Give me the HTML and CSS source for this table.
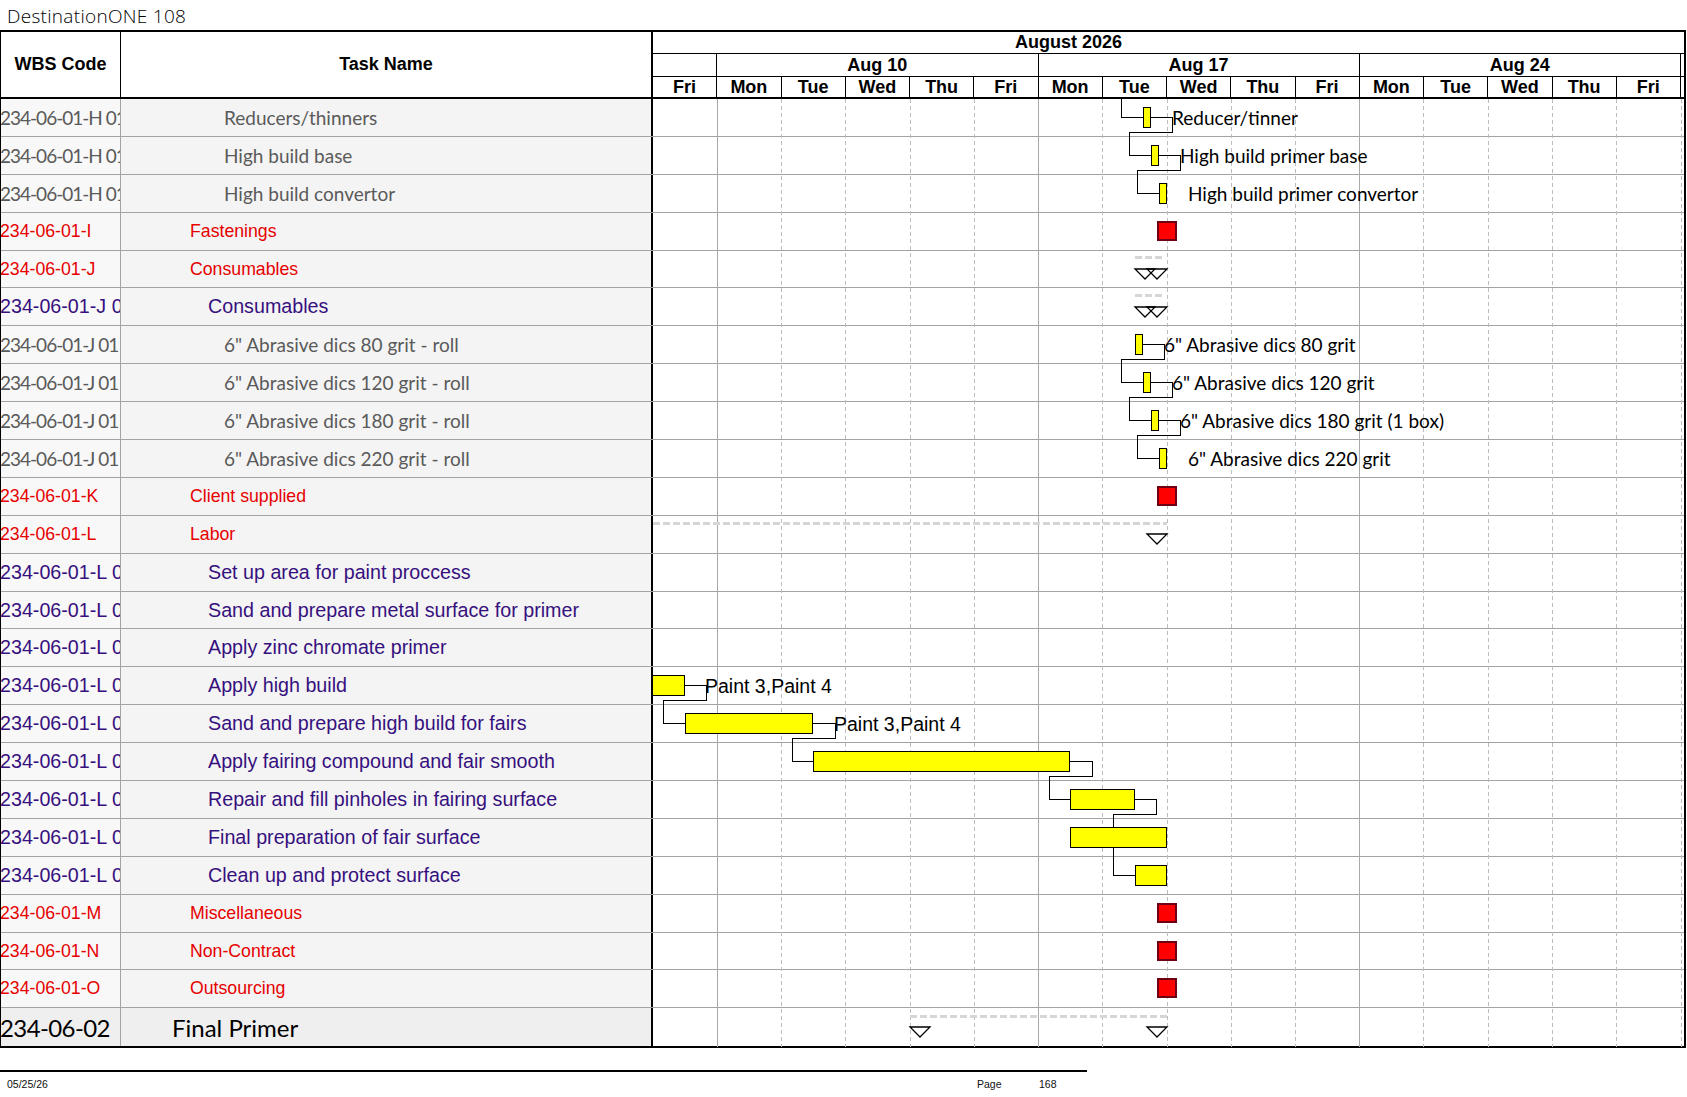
FILE: index.html
```html
<!DOCTYPE html>
<html>
<head>
<meta charset="utf-8">
<title>DestinationONE 108</title>
<link rel="stylesheet" href="styles.css">
</head>
<body>
<div class="title">DestinationONE 108</div>
<div class="sheet">
  <div class="head">
    <div class="h-wbs">WBS Code</div>
    <div class="h-task">Task Name</div>
    <div class="h-time">
      <div class="h-month">August 2026</div>
      <div class="h-weeks">
        <div class="wk"></div>
        <div class="wk">Aug 10</div>
        <div class="wk">Aug 17</div>
        <div class="wk">Aug 24</div>
      </div>
      <div class="h-days">
        <div class="day">Fri</div>
        <div class="day">Mon</div><div class="day">Tue</div><div class="day">Wed</div><div class="day">Thu</div><div class="day">Fri</div>
        <div class="day">Mon</div><div class="day">Tue</div><div class="day">Wed</div><div class="day">Thu</div><div class="day">Fri</div>
        <div class="day">Mon</div><div class="day">Tue</div><div class="day">Wed</div><div class="day">Thu</div><div class="day">Fri</div>
      </div>
    </div>
  </div>
  <div class="body">
    <svg class="overlay" width="1031" height="948" viewBox="0 0 1031 948">
      <g class="grid-solid">
        <line x1="64.5" y1="0" x2="64.5" y2="948"/>
        <line x1="385.5" y1="0" x2="385.5" y2="948"/>
        <line x1="706.5" y1="0" x2="706.5" y2="948"/>
      </g>
      <g class="grid-dash">
        <line x1="128.5" y1="0" x2="128.5" y2="948"/>
        <line x1="192.5" y1="0" x2="192.5" y2="948"/>
        <line x1="257.5" y1="0" x2="257.5" y2="948"/>
        <line x1="321.5" y1="0" x2="321.5" y2="948"/>
        <line x1="449.5" y1="0" x2="449.5" y2="948"/>
        <line x1="514.5" y1="0" x2="514.5" y2="948"/>
        <line x1="578.5" y1="0" x2="578.5" y2="948"/>
        <line x1="642.5" y1="0" x2="642.5" y2="948"/>
        <line x1="770.5" y1="0" x2="770.5" y2="948"/>
        <line x1="835.5" y1="0" x2="835.5" y2="948"/>
        <line x1="899.5" y1="0" x2="899.5" y2="948"/>
        <line x1="963.5" y1="0" x2="963.5" y2="948"/>
        <line x1="1028.5" y1="0" x2="1028.5" y2="948"/>
      </g>
      <g class="summary-line">
        <line x1="482" y1="158.5" x2="512" y2="158.5"/>
        <line x1="482" y1="196.5" x2="512" y2="196.5"/>
        <line x1="0" y1="424" x2="514" y2="424"/>
        <line x1="257" y1="917.5" x2="514" y2="917.5"/>
      </g>
      <g class="summary-tri">
        <polygon points="482,170 502,170 492,180"/>
        <polygon points="494,170 514,170 504,180"/>
        <polygon points="482,208 502,208 492,218"/>
        <polygon points="494,208 514,208 504,218"/>
        <polygon points="494,435 514,435 504,445"/>
        <polygon points="257,928 277,928 267,938"/>
        <polygon points="494,928 514,928 504,938"/>
      </g>
      <g class="links">
        <polyline points="468.5,0 468.5,18.5 490,18.5"/>
        <polyline points="498,18.5 519.5,18.5 519.5,33.5 476.5,33.5 476.5,56.5 498,56.5"/>
        <polyline points="506,56.5 527.5,56.5 527.5,71.5 484.5,71.5 484.5,94.5 506,94.5"/>
        <polyline points="490,245.5 511.5,245.5 511.5,260.5 468.5,260.5 468.5,283.5 490,283.5"/>
        <polyline points="498,283.5 519.5,283.5 519.5,298.5 476.5,298.5 476.5,321.5 498,321.5"/>
        <polyline points="506,321.5 527.5,321.5 527.5,336.5 484.5,336.5 484.5,359.5 506,359.5"/>
        <polyline points="32,586.5 53.5,586.5 53.5,601.5 10.5,601.5 10.5,624.5 32,624.5"/>
        <polyline points="160,624.5 182.5,624.5 182.5,639.5 139.5,639.5 139.5,662.5 160,662.5"/>
        <polyline points="417,662.5 439.5,662.5 439.5,677.5 396.5,677.5 396.5,700.5 417,700.5"/>
        <polyline points="481,700.5 503.5,700.5 503.5,715.5 460.5,715.5 460.5,776.5 482,776.5"/>
      </g>
    </svg>

    <div class="row grey">
      <div class="wbs">234-06-01-H 01</div><div class="task">Reducers/thinners</div>
      <div class="chart"><div class="bar" style="left:490px;width:8px"></div><span class="lbl" style="left:519px">Reducer/tinner</span></div>
    </div>
    <div class="row grey">
      <div class="wbs">234-06-01-H 01</div><div class="task">High build base</div>
      <div class="chart"><div class="bar" style="left:498px;width:8px"></div><span class="lbl" style="left:527px">High build primer base</span></div>
    </div>
    <div class="row grey">
      <div class="wbs">234-06-01-H 01</div><div class="task">High build convertor</div>
      <div class="chart"><div class="bar" style="left:506px;width:8px"></div><span class="lbl" style="left:535px">High build primer convertor</span></div>
    </div>
    <div class="row red">
      <div class="wbs">234-06-01-I</div><div class="task">Fastenings</div>
      <div class="chart"><div class="box" style="left:504px"></div></div>
    </div>
    <div class="row red">
      <div class="wbs">234-06-01-J</div><div class="task">Consumables</div>
      <div class="chart"></div>
    </div>
    <div class="row purple">
      <div class="wbs">234-06-01-J 0</div><div class="task">Consumables</div>
      <div class="chart"></div>
    </div>
    <div class="row grey">
      <div class="wbs">234-06-01-J 01</div><div class="task">6" Abrasive dics 80 grit - roll</div>
      <div class="chart"><div class="bar" style="left:482px;width:8px"></div><span class="lbl" style="left:511px">6" Abrasive dics 80 grit</span></div>
    </div>
    <div class="row grey">
      <div class="wbs">234-06-01-J 01</div><div class="task">6" Abrasive dics 120 grit - roll</div>
      <div class="chart"><div class="bar" style="left:490px;width:8px"></div><span class="lbl" style="left:519px">6" Abrasive dics 120 grit</span></div>
    </div>
    <div class="row grey">
      <div class="wbs">234-06-01-J 01</div><div class="task">6" Abrasive dics 180 grit - roll</div>
      <div class="chart"><div class="bar" style="left:498px;width:8px"></div><span class="lbl" style="left:527px">6" Abrasive dics 180 grit (1 box)</span></div>
    </div>
    <div class="row grey">
      <div class="wbs">234-06-01-J 01</div><div class="task">6" Abrasive dics 220 grit - roll</div>
      <div class="chart"><div class="bar" style="left:506px;width:8px"></div><span class="lbl" style="left:535px">6" Abrasive dics 220 grit</span></div>
    </div>
    <div class="row red">
      <div class="wbs">234-06-01-K</div><div class="task">Client supplied</div>
      <div class="chart"><div class="box" style="left:504px"></div></div>
    </div>
    <div class="row red">
      <div class="wbs">234-06-01-L</div><div class="task">Labor</div>
      <div class="chart"></div>
    </div>
    <div class="row purple">
      <div class="wbs">234-06-01-L 0</div><div class="task">Set up area for paint proccess</div>
      <div class="chart"></div>
    </div>
    <div class="row purple">
      <div class="wbs">234-06-01-L 0</div><div class="task">Sand and prepare metal surface for primer</div>
      <div class="chart"></div>
    </div>
    <div class="row purple">
      <div class="wbs">234-06-01-L 0</div><div class="task">Apply zinc chromate primer</div>
      <div class="chart"></div>
    </div>
    <div class="row purple">
      <div class="wbs">234-06-01-L 0</div><div class="task">Apply high build</div>
      <div class="chart"><div class="bar" style="left:-2px;width:34px"></div><span class="lbl arial" style="left:52px">Paint 3,Paint 4</span></div>
    </div>
    <div class="row purple">
      <div class="wbs">234-06-01-L 0</div><div class="task">Sand and prepare high build for fairs</div>
      <div class="chart"><div class="bar" style="left:32px;width:128px"></div><span class="lbl arial" style="left:181px">Paint 3,Paint 4</span></div>
    </div>
    <div class="row purple">
      <div class="wbs">234-06-01-L 0</div><div class="task">Apply fairing compound and fair smooth</div>
      <div class="chart"><div class="bar" style="left:160px;width:257px"></div></div>
    </div>
    <div class="row purple">
      <div class="wbs">234-06-01-L 0</div><div class="task">Repair and fill pinholes in fairing surface</div>
      <div class="chart"><div class="bar" style="left:417px;width:65px"></div></div>
    </div>
    <div class="row purple">
      <div class="wbs">234-06-01-L 0</div><div class="task">Final preparation of fair surface</div>
      <div class="chart"><div class="bar" style="left:417px;width:97px"></div></div>
    </div>
    <div class="row purple">
      <div class="wbs">234-06-01-L 0</div><div class="task">Clean up and protect surface</div>
      <div class="chart"><div class="bar" style="left:482px;width:32px"></div></div>
    </div>
    <div class="row red">
      <div class="wbs">234-06-01-M</div><div class="task">Miscellaneous</div>
      <div class="chart"><div class="box" style="left:504px"></div></div>
    </div>
    <div class="row red">
      <div class="wbs">234-06-01-N</div><div class="task">Non-Contract</div>
      <div class="chart"><div class="box" style="left:504px"></div></div>
    </div>
    <div class="row red">
      <div class="wbs">234-06-01-O</div><div class="task">Outsourcing</div>
      <div class="chart"><div class="box" style="left:504px"></div></div>
    </div>
    <div class="row final">
      <div class="wbs">234-06-02</div><div class="task">Final Primer</div>
      <div class="chart"></div>
    </div>
  </div>
</div>
<div class="footer">
  <span class="f-date">05/25/26</span>
  <span class="f-page">Page</span>
  <span class="f-num">168</span>
</div>
</body>
</html>
```

FILE: styles.css
```css
* { box-sizing: border-box; }

html, body {
  margin: 0;
  padding: 0;
  background: #ffffff;
}

body {
  width: 1687px;
  height: 1097px;
  overflow: hidden;
  font-family: "Liberation Sans", Arial, sans-serif;
  color: #000;
}

.title {
  height: 30px;
  padding: 3px 0 0 7px;
  font-family: "Open Sans", "DejaVu Sans", sans-serif;
  font-weight: 300;
  font-size: 19px;
  letter-spacing: 0.3px;
  line-height: 26px;
  color: #000;
}

.sheet {
  width: 1686px;
  border-top: 2px solid #000;
  border-left: 1px solid #000;
  border-right: 2px solid #000;
  border-bottom: 2px solid #000;
}

/* ---------- header ---------- */
.head {
  display: flex;
  height: 67px;
  border-bottom: 2px solid #000;
  font-weight: bold;
  font-size: 18px;
}

.h-wbs {
  width: 120px;
  border-right: 1px solid #000;
  display: flex;
  align-items: center;
  justify-content: center;
}

.h-task {
  width: 532px;
  border-right: 2px solid #000;
  display: flex;
  align-items: center;
  justify-content: center;
}

.h-time {
  flex: 1;
  display: flex;
  flex-direction: column;
}

.h-month {
  height: 22px;
  border-bottom: 1px solid #000;
  text-align: center;
  padding-right: 200px;
  line-height: 21px;
}

.h-weeks {
  height: 23px;
  border-bottom: 1px solid #000;
  display: grid;
  grid-template-columns: 64.25px 321.25px 321.25px 321.25px;
}

.wk {
  border-right: 1px solid #000;
  text-align: center;
  line-height: 22px;
}

.h-days {
  height: 20px;
  display: grid;
  grid-template-columns: repeat(16, 64.25px);
}

.day {
  border-right: 1px solid #000;
  text-align: center;
  line-height: 20px;
}

/* ---------- body ---------- */
.body {
  position: relative;
}

.overlay {
  position: absolute;
  left: 652px;
  top: 0;
  shape-rendering: crispEdges;
}

.grid-solid line {
  stroke: #a9a9a9;
  stroke-width: 1;
}

.grid-dash line {
  stroke: #bdbdbd;
  stroke-width: 1;
  stroke-dasharray: 4 3;
}

.summary-line line {
  stroke: #d6d6d6;
  stroke-width: 3;
  stroke-dasharray: 7 3;
}

.summary-tri polygon {
  fill: none;
  stroke: #000;
  stroke-width: 1.3;
  shape-rendering: geometricPrecision;
}

.links polyline {
  fill: none;
  stroke: #000;
  stroke-width: 1;
}

.row {
  display: flex;
  height: 37.9px;
  border-bottom: 1px solid #a3a3a3;
}

.row.final {
  border-bottom: none;
  height: 37.4px;
}

.wbs {
  width: 120px;
  border-right: 1px solid #a3a3a3;
  background: #f8f8f8;
  white-space: nowrap;
  overflow: hidden;
  text-indent: -1px;
  display: flex;
  align-items: center;
}

.task {
  width: 532px;
  border-right: 2px solid #000;
  background: #f4f4f4;
  white-space: nowrap;
  overflow: hidden;
  display: flex;
  align-items: center;
}

.chart {
  flex: 1;
  position: relative;
  overflow: hidden;
}

/* row styles */
.grey .wbs, .grey .task {
  font-family: "Lato", "Open Sans", sans-serif;
  font-size: 19px;
  color: #5a5a5a;
}
.grey .wbs { letter-spacing: -1px; }
.grey .task { padding-left: 103px; }

.red .wbs, .red .task {
  font-family: "Liberation Sans", Arial, sans-serif;
  font-size: 17.7px;
  color: #e60000;
}
.red .task { padding-left: 69px; }

.purple .wbs, .purple .task {
  font-family: "Liberation Sans", Arial, sans-serif;
  font-size: 19.7px;
  color: #36107e;
}
.purple .task { padding-left: 87px; }

.final .wbs, .final .task {
  font-family: "Lato", "Open Sans", sans-serif;
  font-size: 24px;
  color: #000;
  background: #efefef;
}
.final .wbs { letter-spacing: -0.6px; }
.final .task { padding-left: 51px; }

/* gantt items */
.bar {
  position: absolute;
  top: 8px;
  height: 21px;
  background: #ffff00;
  border: 1px solid #000;
}

.box {
  position: absolute;
  top: 8px;
  width: 20px;
  height: 20px;
  background: #ff0000;
  border: 2px solid #6e0014;
}

.lbl {
  position: absolute;
  top: 8px;
  line-height: 22px;
  font-family: "Lato", "Open Sans", sans-serif;
  font-size: 19px;
  color: #000;
  white-space: nowrap;
}

.lbl.arial {
  font-family: "Liberation Sans", Arial, sans-serif;
  font-size: 19.5px;
}

/* ---------- footer ---------- */
.footer {
  margin-top: 22px;
  width: 1087px;
  border-top: 2px solid #000;
  display: grid;
  grid-template-columns: 970px 62px auto;
  padding-left: 7px;
  padding-top: 6px;
  font-family: "Liberation Sans", Arial, sans-serif;
  font-size: 10.5px;
  color: #111;
}
```
